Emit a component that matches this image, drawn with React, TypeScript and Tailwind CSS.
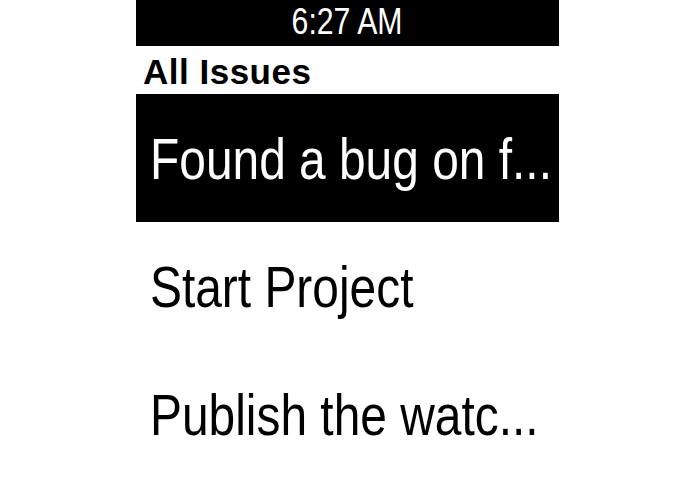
const issues = [
  { id: 1, title: 'Found a bug on f...' },
  { id: 2, title: 'Start Project' },
  { id: 3, title: 'Publish the watc...' },
];

// Pebble's Gothic is a condensed face; Liberation Sans squeezed horizontally stands in for it
const gothic = 'font-["Liberation_Sans",Arial,sans-serif]';

export default function App() {
  const selected = 1;

  return (
    <div className="flex h-[494px] w-[695px] justify-center overflow-hidden bg-white">
      <div className="flex w-[423px] flex-col">
        {/* status bar */}
        <div
          className={`flex h-[46px] shrink-0 justify-center bg-black pt-[4px] text-[36px] leading-[36px] text-white ${gothic}`}
        >
          <span className="inline-block origin-center scale-x-[0.84]">6:27 AM</span>
        </div>

        {/* section header */}
        <div className={`h-[48px] shrink-0 pl-[7px] pt-[8px] text-[35px] font-bold leading-[35px] tracking-[0.5px] text-black ${gothic}`}>
          All Issues
        </div>

        {/* menu rows */}
        {issues.map((issue) => (
          <div
            key={issue.id}
            className={`h-[128px] shrink-0 whitespace-nowrap pl-[14px] pt-[37px] text-[57px] leading-[57px] ${gothic} ${
              issue.id === selected ? 'bg-black text-white' : 'bg-white text-black'
            }`}
          >
            <span className="inline-block origin-left scale-x-[0.84]">{issue.title}</span>
          </div>
        ))}
      </div>
    </div>
  );
}
